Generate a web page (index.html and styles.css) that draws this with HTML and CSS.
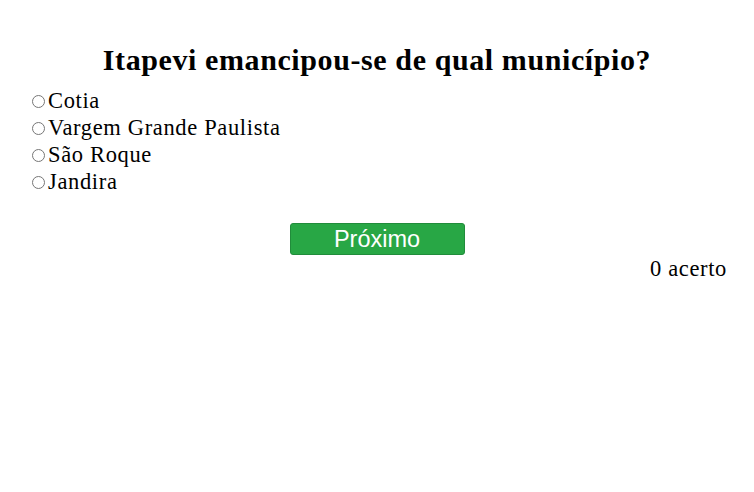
FILE: index.html
```html
<!DOCTYPE html>
<html lang="pt-BR">
<head>
<meta charset="utf-8">
<title>Quiz</title>
<link rel="stylesheet" href="styles.css">
</head>
<body>
<main class="quiz">
  <h2 class="question">Itapevi emancipou-se de qual município?</h2>
  <ul class="options">
    <li class="option"><label><input type="radio" name="resp" class="radio"><span>Cotia</span></label></li>
    <li class="option"><label><input type="radio" name="resp" class="radio"><span>Vargem Grande Paulista</span></label></li>
    <li class="option"><label><input type="radio" name="resp" class="radio"><span>São Roque</span></label></li>
    <li class="option"><label><input type="radio" name="resp" class="radio"><span>Jandira</span></label></li>
  </ul>
  <div class="actions"><button class="next" type="button">Próximo</button></div>
  <div class="score">0 acerto</div>
</main>
</body>
</html>
```
FILE: styles.css
```css
html, body {
  margin: 0;
  padding: 0;
  background: #fff;
}
body {
  font-family: "Liberation Serif", "Times New Roman", serif;
  color: #000;
}
.quiz {
  padding: 42px 27px 0 27px;
}
.question {
  margin: 0 0 9px 0;
  text-align: center;
  font-size: 30px;
  font-weight: bold;
  line-height: 36px;
  letter-spacing: 0.6px;
}
.options {
  list-style: none;
  margin: 0;
  padding: 0;
}
.option {
  font-size: 22.5px;
  letter-spacing: 0.65px;
  line-height: 27px;
  height: 27px;
}
.option label {
  display: flex;
  align-items: center;
}
.radio {
  width: 13px;
  height: 13px;
  margin: 1px 3px 0 5px;
}
.actions {
  display: flex;
  justify-content: center;
  margin-top: 28px;
}
.next {
  width: 175px;
  height: 32px;
  background: #28a745;
  border: 1px solid #218c3b;
  border-radius: 3px;
  color: #fff;
  font-family: "Liberation Sans", Arial, sans-serif;
  font-size: 23.5px;
  padding: 0;
  cursor: pointer;
}
.score {
  text-align: right;
  font-size: 22.5px;
  letter-spacing: 0.65px;
  line-height: 27px;
}
```
